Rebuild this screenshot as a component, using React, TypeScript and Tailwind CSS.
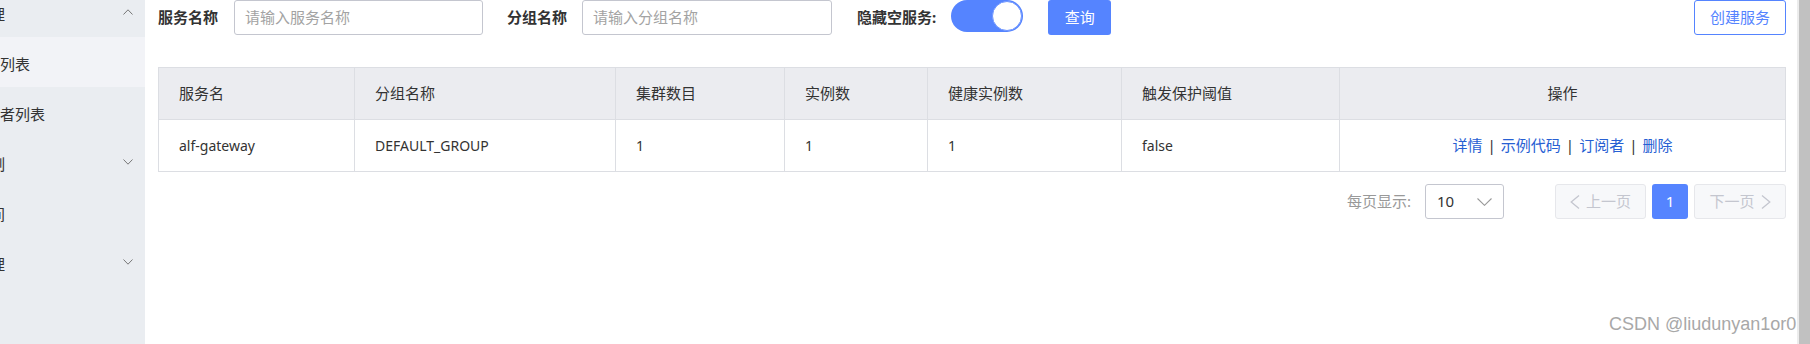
import React from "react";

const menu = [
  { text: "服务管理", child: false, open: true },
  { text: "服务列表", child: true, active: true },
  { text: "订阅者列表", child: true },
  { text: "权限控制", child: false, open: false },
  { text: "命名空间", child: false },
  { text: "集群管理", child: false, open: false },
];

const columns = ["服务名", "分组名称", "集群数目", "实例数", "健康实例数", "触发保护阈值"];
const row = ["alf-gateway", "DEFAULT_GROUP", "1", "1", "1", "false"];
const actions = ["详情", "示例代码", "订阅者", "删除"];

function MenuArrow({ up }: { up?: boolean }) {
  return (
    <svg width="10" height="6" viewBox="0 0 10 6" className="ml-auto shrink-0">
      <polyline
        points={up ? "0.5,5.5 5,0.8 9.5,5.5" : "0.5,0.5 5,5.2 9.5,0.5"}
        fill="none"
        stroke="#777"
        strokeWidth="1"
      />
    </svg>
  );
}

function Sidebar() {
  return (
    <div className="w-[145px] shrink-0 overflow-hidden bg-[#eaedf1]">
      <div className="-mt-[13px]">
        {menu.map((m) => (
          <div
            key={m.text}
            className={`flex h-[50px] items-center pr-[12px] ${m.active ? "bg-[#f2f3f7]" : ""}`}
          >
            <span
              className={`translate-y-[2px] whitespace-nowrap text-[15px] text-[#333] ${m.child ? "-ml-[30px]" : "-ml-[55px]"}`}
            >
              {m.text}
            </span>
            {m.open !== undefined && <MenuArrow up={m.open} />}
          </div>
        ))}
      </div>
    </div>
  );
}

function Toolbar() {
  return (
    <div className="flex h-[35px] items-center">
      <span className="text-[15px] font-bold text-[#333]">服务名称</span>
      <div className="ml-[16px] flex h-[35px] w-[249px] items-center rounded-[3px] border border-[#c4c6cf] pl-[10px] text-[15px] text-[#a3a3a3]">
        请输入服务名称
      </div>
      <span className="ml-[24px] text-[15px] font-bold text-[#333]">分组名称</span>
      <div className="ml-[15px] flex h-[35px] w-[250px] items-center rounded-[3px] border border-[#c4c6cf] pl-[10px] text-[15px] text-[#a3a3a3]">
        请输入分组名称
      </div>
      <span className="ml-[25px] text-[15px] font-bold text-[#333]">隐藏空服务:</span>
      <div className="ml-[15px] flex h-[32px] w-[72px] items-center justify-end self-start rounded-full bg-[#5584ff] pr-[1px]">
        <div className="size-[30px] rounded-full border border-[#6f96ff] bg-white" />
      </div>
      <button className="ml-[25px] h-[35px] w-[63px] rounded-[3px] bg-[#5584ff] text-[15px] text-white">
        查询
      </button>
      <button className="ml-auto h-[35px] w-[92px] rounded-[3px] border border-[#5584ff] bg-white text-[15px] text-[#5584ff]">
        创建服务
      </button>
    </div>
  );
}

function ServiceTable() {
  return (
    <table className="mt-[32px] w-full table-fixed border-collapse border border-[#dcdee3] text-[#333]">
      <colgroup>
        <col className="w-[196px]" />
        <col className="w-[261px]" />
        <col className="w-[169px]" />
        <col className="w-[143px]" />
        <col className="w-[194px]" />
        <col className="w-[218px]" />
        <col />
      </colgroup>
      <thead>
        <tr className="bg-[#ebecf0]">
          {columns.map((c) => (
            <th key={c} className="h-[52px] border border-[#dcdee3] pl-[20px] text-left text-[15px] font-normal">
              {c}
            </th>
          ))}
          <th className="h-[52px] border border-[#dcdee3] text-center text-[15px] font-normal">操作</th>
        </tr>
      </thead>
      <tbody>
        <tr>
          {row.map((v, i) => (
            <td key={i} className="h-[52px] border border-[#dcdee3] pl-[20px] text-[14px]">
              {v}
            </td>
          ))}
          <td className="h-[52px] border border-[#dcdee3] text-center text-[15px]">
            {actions.map((a, i) => (
              <React.Fragment key={a}>
                {i > 0 && <span className="mx-[5px] text-[#333]">|</span>}
                <a className="text-[#2760d3]">{a}</a>
              </React.Fragment>
            ))}
          </td>
        </tr>
      </tbody>
    </table>
  );
}

function Pagination() {
  return (
    <div className="mt-[12px] flex items-center justify-end">
      <span className="text-[15px] text-[#999]">每页显示:</span>
      <div className="ml-[14px] flex h-[35px] w-[79px] items-center justify-between rounded-[3px] border border-[#c4c6cf] px-[11px]">
        <span className="text-[15px] text-[#333]">10</span>
        <svg width="15" height="8" viewBox="0 0 15 8">
          <polyline points="0.5,0.5 7.5,7.3 14.5,0.5" fill="none" stroke="#999" strokeWidth="1.1" />
        </svg>
      </div>
      <button className="ml-[51px] flex h-[35px] w-[91px] items-center justify-center gap-[6px] rounded-[3px] border border-[#e6e7eb] bg-[#f7f8fa] text-[15px] text-[#c4c6cf]">
        <svg width="10" height="14" viewBox="0 0 10 14">
          <polyline points="9,0.5 1.2,7 9,13.5" fill="none" stroke="#c4c6cf" strokeWidth="1.3" />
        </svg>
        上一页
      </button>
      <button className="ml-[6px] h-[35px] w-[36px] rounded-[3px] bg-[#5584ff] text-[15px] text-white">1</button>
      <button className="ml-[6px] flex h-[35px] w-[92px] items-center justify-center gap-[6px] rounded-[3px] border border-[#e6e7eb] bg-[#f7f8fa] text-[15px] text-[#c4c6cf]">
        下一页
        <svg width="10" height="14" viewBox="0 0 10 14">
          <polyline points="1,0.5 8.8,7 1,13.5" fill="none" stroke="#c4c6cf" strokeWidth="1.3" />
        </svg>
      </button>
    </div>
  );
}

export default function App() {
  return (
    <div className="relative flex h-[344px] w-[1810px] overflow-hidden bg-white [font-family:'Noto_Sans','Noto_Sans_CJK_SC',sans-serif]">
      <Sidebar />
      <main className="flex-1 pl-[13px] pr-[11px]">
        <Toolbar />
        <ServiceTable />
        <Pagination />
      </main>
      <div className="flex w-[13px] shrink-0">
        <div className="w-[2px] bg-[#ececec]" />
        <div className="flex-1 bg-[#c1c1c1]" />
      </div>
      <span className="absolute left-[1609px] top-[313px] text-[18px] leading-[22px] text-[#a8a8a8] [font-family:'Liberation_Sans',Arial,sans-serif]">
        CSDN @liudunyan1or0
      </span>
    </div>
  );
}
